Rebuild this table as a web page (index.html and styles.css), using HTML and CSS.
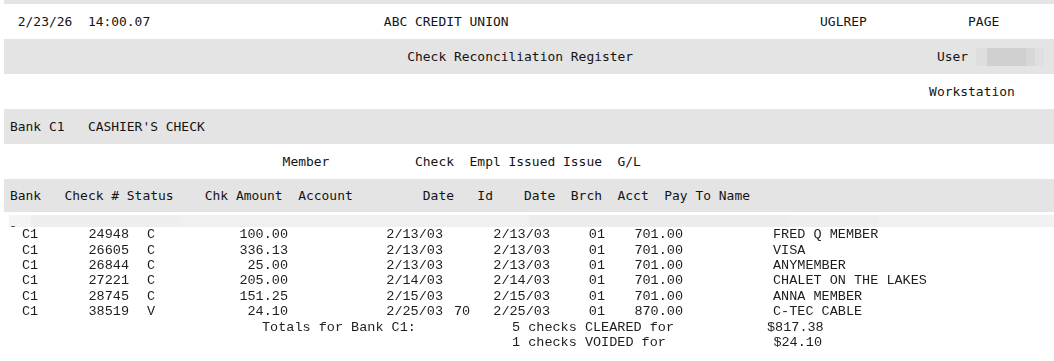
FILE: index.html
```html
<!DOCTYPE html>
<html lang="en">
<head>
<meta charset="utf-8">
<title>Check Reconciliation Register</title>
<link rel="stylesheet" href="styles.css">
</head>
<body>
<header class="report">
  <div class="band shade cap"></div>
  <div class="band"> 2/23/26  14:00.07                              ABC CREDIT UNION                                        UGLREP             PAGE</div>
  <div class="band shade">                                                   Check Reconciliation Register                                       User <span class="masked"></span></div>
  <div class="band">                                                                                                                      Workstation</div>
  <div class="band shade">Bank C1   CASHIER'S CHECK</div>
  <div class="band">                                   Member           Check  Empl Issued Issue  G/L</div>
  <div class="band shade short">Bank   Check # Status    Chk Amount  Account         Date   Id    Date  Brch  Acct  Pay To Name</div>
</header>
<section class="detail">
  <div class="masked-row"></div>
  <div class="rows">
    <div class="row"><span class="tick">ˉ</span><span>C1</span><span class="r">24948</span><span class="stat">C</span><span class="r">100.00</span><span class="r">2/13/03</span><span class="id"></span><span class="r">2/13/03</span><span class="r">01</span><span class="r">701.00</span><span class="name">FRED Q MEMBER</span></div>
    <div class="row"><span class="tick"></span><span>C1</span><span class="r">26605</span><span class="stat">C</span><span class="r">336.13</span><span class="r">2/13/03</span><span class="id"></span><span class="r">2/13/03</span><span class="r">01</span><span class="r">701.00</span><span class="name">VISA</span></div>
    <div class="row"><span class="tick"></span><span>C1</span><span class="r">26844</span><span class="stat">C</span><span class="r">25.00</span><span class="r">2/13/03</span><span class="id"></span><span class="r">2/13/03</span><span class="r">01</span><span class="r">701.00</span><span class="name">ANYMEMBER</span></div>
    <div class="row"><span class="tick"></span><span>C1</span><span class="r">27221</span><span class="stat">C</span><span class="r">205.00</span><span class="r">2/14/03</span><span class="id"></span><span class="r">2/14/03</span><span class="r">01</span><span class="r">701.00</span><span class="name">CHALET ON THE LAKES</span></div>
    <div class="row"><span class="tick"></span><span>C1</span><span class="r">28745</span><span class="stat">C</span><span class="r">151.25</span><span class="r">2/15/03</span><span class="id"></span><span class="r">2/15/03</span><span class="r">01</span><span class="r">701.00</span><span class="name">ANNA MEMBER</span></div>
    <div class="row"><span class="tick"></span><span>C1</span><span class="r">38519</span><span class="stat">V</span><span class="r">24.10</span><span class="r">2/25/03</span><span class="id">70</span><span class="r">2/25/03</span><span class="r">01</span><span class="r">870.00</span><span class="name">C-TEC CABLE</span></div>
    <div class="total"><span class="t-label">Totals for Bank C1:</span><span class="t-desc">5 checks CLEARED for</span><span class="t-amt">$817.38</span></div>
    <div class="total"><span class="t-label"></span><span class="t-desc">1 checks VOIDED for</span><span class="t-amt">$24.10</span></div>
  </div>
</section>
</body>
</html>
```
FILE: styles.css
```css
html, body {
  margin: 0;
  padding: 0;
  background: #ffffff;
}

.report {
  margin-left: 4px;
  font-family: "DejaVu Sans Mono", "Liberation Mono", monospace;
  font-size: 12.95px;
  color: #141414;
}

.band {
  height: 35px;
  line-height: 35px;
  padding-left: 6px;
  white-space: pre;
  overflow: hidden;
}

.band.cap {
  height: 4px;
}

.band.short {
  height: 33px;
  line-height: 33px;
}

.shade {
  background: #e4e4e4;
}

.masked {
  display: inline-block;
  width: 68px;
  height: 18px;
  vertical-align: -5px;
  background: linear-gradient(90deg,
    #dedede 0, #dedede 11px,
    #d0d0d0 11px, #d0d0d0 50px,
    #d7d7d7 50px, #d7d7d7 59px,
    #e0e0e0 59px, #e0e0e0 68px);
}

.detail {
  font-family: "Liberation Mono", "DejaVu Sans Mono", monospace;
  font-size: 13.5px;
  color: #1e1e1e;
}

.masked-row {
  margin: 3px 0 0 9px;
  height: 12.3px;
  background: linear-gradient(90deg,
    #f4f4f4 0, #f4f4f4 22px,
    #eeeeee 22px, #eeeeee 170px,
    #f0f0f0 170px, #f0f0f0 520px,
    #ececec 520px, #ececec 780px,
    #eeeeee 780px, #eeeeee 870px,
    #f1f1f1 870px);
}

.rows {
  line-height: 15.4px;
  filter: blur(0.3px);
}

.row {
  display: grid;
  grid-template-columns: 22px 38px 69px 71px 88px 155px 27px 80px 55px 78px 1fr;
  height: 15.4px;
  white-space: pre;
}

.r {
  text-align: right;
}

.tick {
  padding-left: 9px;
  line-height: 10px;
}

.stat {
  padding-left: 18px;
}

.id {
  padding-left: 11px;
}

.name {
  padding-left: 90px;
}

.total {
  display: flex;
  height: 15.4px;
  padding-left: 262px;
  white-space: pre;
}

.t-label {
  width: 250px;
}

.t-desc {
  width: 255px;
}

.t-amt {
  width: 55px;
  text-align: right;
}
```
